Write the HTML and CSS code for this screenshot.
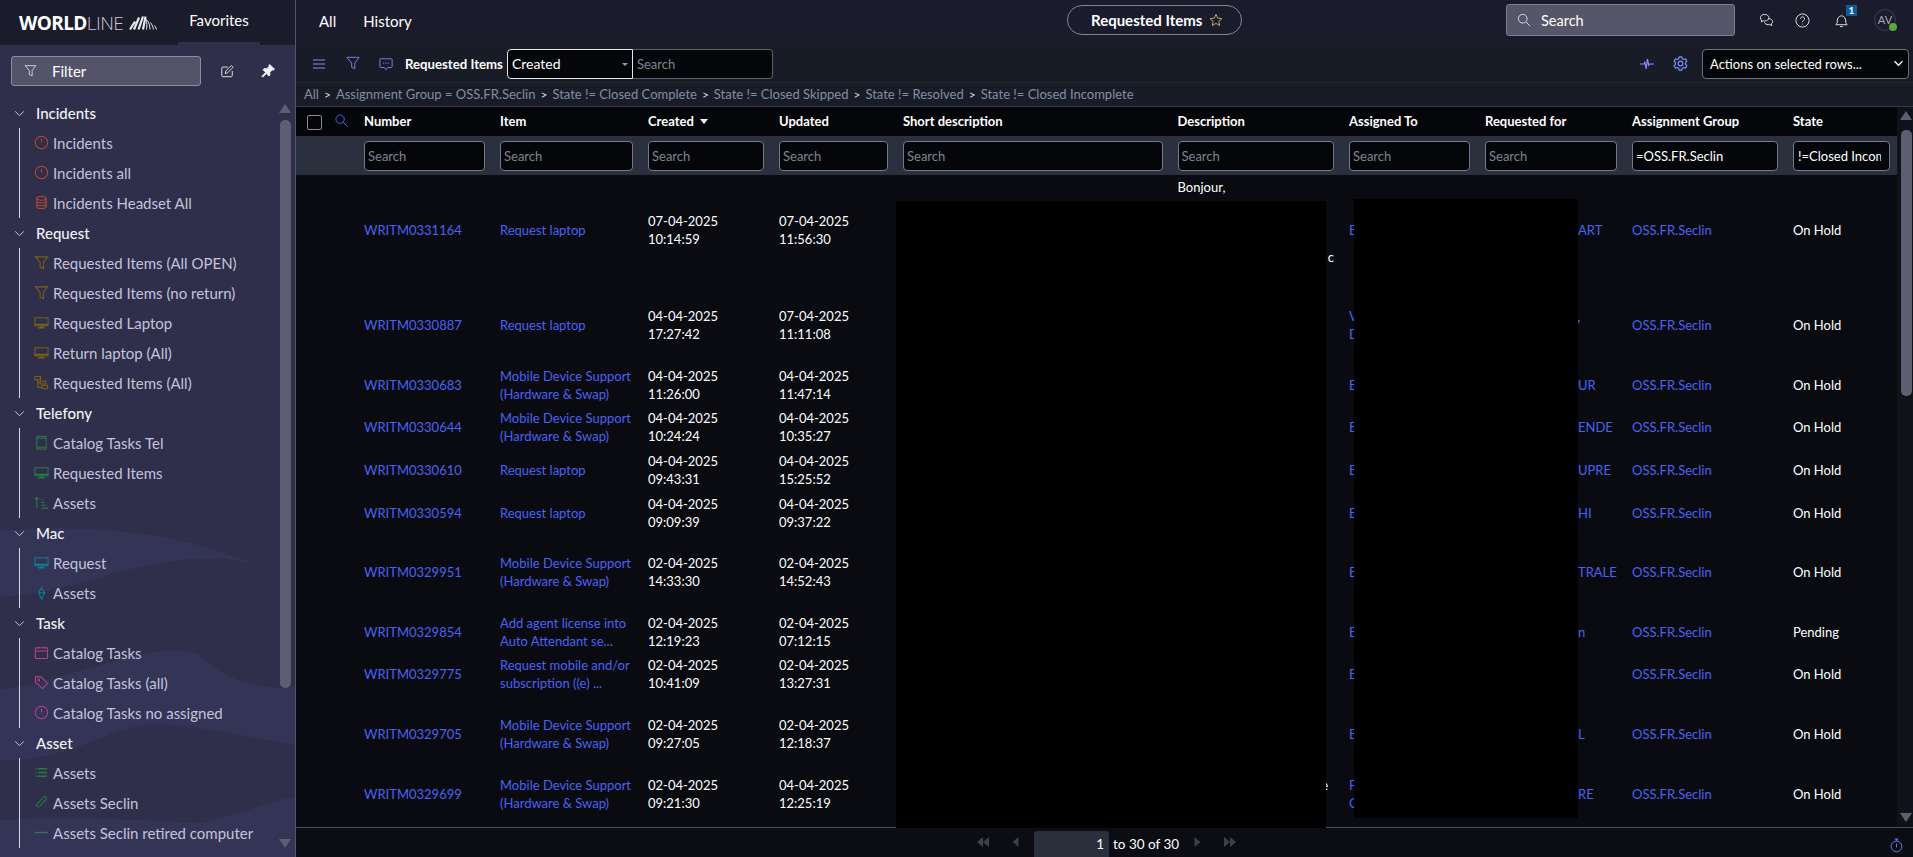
FILE: index.html
```html
<!DOCTYPE html>
<html lang="en">
<head>
    <meta charset="UTF-8">
    <title>Requested Items</title>
    <link rel="stylesheet" href="styles.css">
</head>
<body>
<svg class="defs" aria-hidden="true">
    <symbol id="i-alert" viewBox="0 0 16 16"><circle cx="8" cy="8" r="6.6"/><path d="M8 4v4"/></symbol>
    <symbol id="i-db" viewBox="0 0 16 16"><ellipse cx="8" cy="3.5" rx="5" ry="2"/><path d="M3 3.5v9c0 1.100 2.200 2 5 2s5-.9 5-2v-9M3 6.500c0 1.100 2.200 2 5 2s5-.9 5-2M3 9.500c0 1.100 2.200 2 5 2s5-.9 5-2"/></symbol>
    <symbol id="i-funnel" viewBox="0 0 16 16"><path d="M1.500 2h13L10 8v6.500L6.500 13V8z"/></symbol>
    <symbol id="i-monitor" viewBox="0 0 16 16"><rect x="1" y="3" width="14" height="8.500"/><path d="M1 10h14M8 11.500v2M4.500 13.500h7" stroke-width="1.600"/></symbol>
    <symbol id="i-tree" viewBox="0 0 16 16"><rect x="1" y="1.500" width="6" height="3.500"/><rect x="6.500" y="6.500" width="6" height="3"/><rect x="8.500" y="11" width="6" height="3.500"/><path d="M4 5v8h4.500M4 8h2.500"/></symbol>
    <symbol id="i-tablet" viewBox="0 0 16 16"><rect x="3" y="1.500" width="10" height="13.500"/><path d="M3 3.500h10M3 13h10"/></symbol>
    <symbol id="i-sort" viewBox="0 0 16 16"><path d="M3 14V3M1 5l2-2.500L5 5M8 5h2M8 8h3.500M8 11h5M8 14h7"/></symbol>
    <symbol id="i-bolt" viewBox="0 0 16 16"><path d="M9 1L5 8l3 7 3.500-6.500-3-4.500M5 8l3 .5M11.500 8.500L8 8"/></symbol>
    <symbol id="i-cal" viewBox="0 0 16 16"><rect x="1.500" y="3" width="13" height="11.500" rx="1"/><path d="M1.500 6.500h13M5 1.500V4M11 1.500V4"/></symbol>
    <symbol id="i-tag" viewBox="0 0 16 16"><path d="M1.500 2h6l7 7-5.500 5.500-7.500-7z"/><circle cx="5" cy="5.500" r="1"/></symbol>
    <symbol id="i-list" viewBox="0 0 16 16"><path d="M1.500 4h1M4 4h10M1.500 8h1M4 8h10M1.500 12h1M4 12h10" stroke-width="1.500"/></symbol>
    <symbol id="i-clip" viewBox="0 0 16 16"><path d="M13.500 4L6 12c-1 1-2.400 1-3 .3-.7-.7-.6-1.800.3-2.800L10 2.500c1-1 2-1 2.800-.3.8.8.7 1.900-.2 2.800L6 12"/></symbol>
    <symbol id="i-dash" viewBox="0 0 16 16"><path d="M1 8h14" stroke-width="1.500"/></symbol>
</svg>

<div class="page">
    <aside class="nav">
        <div class="nav-top">
            <div class="logo">
                <span class="logo-text"><b>WORLD</b>LINE</span>
                <svg class="logo-mark" viewBox="0 0 28 15">
                    <path class="mark-bold" d="M1 14.500l5-8M5 14.500l5-12M9.500 14.500l4.500-13M14 14.500l2.500-13"/>
                    <path d="M17.500 14.500c.5-3 .5-7-.5-11M21 14.500c0-3-1-6.500-2.500-9M24.500 14.500c-.5-2.500-1.500-5-3-7M27.500 14.500c-.5-1.500-1-3-2-4"/>
                </svg>
            </div>
            <div class="nav-tab">Favorites</div>
        </div>

        <svg class="nav-waves" viewBox="0 0 295 857" preserveAspectRatio="none">
            <path d="M0 530C100 525 200 530 295 585C250 556 220 556 180 560C120 566 60 595 0 597z"/>
            <path d="M0 690C70 680 150 640 197 653C215 672 250 692 295 687V745C240 735 180 722 143 725C100 733 70 760 0 760z"/>
            <path d="M0 820C70 815 130 820 200 823C240 815 270 800 295 797V857H0z"/>
        </svg>

        <div class="nav-filter">
            <div class="filter-box">
                <svg class="filter-icon" viewBox="0 0 16 16"><path d="M1.500 2h13L10 8v6.500L6.500 13V8z"/></svg>
                <span>Filter</span>
            </div>
            <svg class="tool-icon" viewBox="0 0 16 16"><path d="M14 8v5.500c0 .5-.5 1-1 1H3c-.5 0-1-.5-1-1v-9c0-.5.5-1 1-1h6M6 11l.7-3L13 1.700l2 2L8.800 10z"/></svg>
            <svg class="tool-icon pin" viewBox="0 0 16 16"><path d="M10 .5l5.500 5.500-1.500 1-1-.3-3 3 .3 2.800-1.300 1.300-3-3L2 15l-1-1 4.300-4.500-3-3L3.600 5.200l2.800.3 3-3L9 1.500z"/></svg>
        </div>

        <div class="nav-list">
            <div class="group">
                <div class="group-head"><svg class="chev" viewBox="0 0 12 8"><path d="M1 1.500l5 5 5-5"/></svg>Incidents</div>
                <ul>
                    <li class="red"><svg><use href="#i-alert"/></svg>Incidents</li>
                    <li class="red"><svg><use href="#i-alert"/></svg>Incidents all</li>
                    <li class="red"><svg><use href="#i-db"/></svg>Incidents Headset All</li>
                </ul>
            </div>
            <div class="group">
                <div class="group-head"><svg class="chev" viewBox="0 0 12 8"><path d="M1 1.500l5 5 5-5"/></svg>Request</div>
                <ul>
                    <li class="gold"><svg><use href="#i-funnel"/></svg>Requested Items (All OPEN)</li>
                    <li class="gold"><svg><use href="#i-funnel"/></svg>Requested Items (no return)</li>
                    <li class="gold"><svg><use href="#i-monitor"/></svg>Requested Laptop</li>
                    <li class="gold"><svg><use href="#i-monitor"/></svg>Return laptop (All)</li>
                    <li class="gold"><svg><use href="#i-tree"/></svg>Requested Items (All)</li>
                </ul>
            </div>
            <div class="group">
                <div class="group-head"><svg class="chev" viewBox="0 0 12 8"><path d="M1 1.500l5 5 5-5"/></svg>Telefony</div>
                <ul>
                    <li class="green"><svg><use href="#i-tablet"/></svg>Catalog Tasks Tel</li>
                    <li class="green"><svg><use href="#i-monitor"/></svg>Requested Items</li>
                    <li class="green"><svg><use href="#i-sort"/></svg>Assets</li>
                </ul>
            </div>
            <div class="group">
                <div class="group-head"><svg class="chev" viewBox="0 0 12 8"><path d="M1 1.500l5 5 5-5"/></svg>Mac</div>
                <ul>
                    <li class="teal"><svg><use href="#i-monitor"/></svg>Request</li>
                    <li class="teal"><svg><use href="#i-bolt"/></svg>Assets</li>
                </ul>
            </div>
            <div class="group">
                <div class="group-head"><svg class="chev" viewBox="0 0 12 8"><path d="M1 1.500l5 5 5-5"/></svg>Task</div>
                <ul>
                    <li class="pink"><svg><use href="#i-cal"/></svg>Catalog Tasks</li>
                    <li class="pink"><svg><use href="#i-tag"/></svg>Catalog Tasks (all)</li>
                    <li class="pink"><svg><use href="#i-alert"/></svg>Catalog Tasks no assigned</li>
                </ul>
            </div>
            <div class="group">
                <div class="group-head"><svg class="chev" viewBox="0 0 12 8"><path d="M1 1.500l5 5 5-5"/></svg>Asset</div>
                <ul>
                    <li class="green"><svg><use href="#i-list"/></svg>Assets</li>
                    <li class="green"><svg><use href="#i-clip"/></svg>Assets Seclin</li>
                    <li class="green"><svg><use href="#i-dash"/></svg>Assets Seclin retired computer</li>
                </ul>
            </div>
        </div>

        <div class="nav-scroll">
            <i class="arrow-up"></i>
            <i class="nav-thumb"></i>
            <i class="arrow-down"></i>
        </div>
    </aside>

    <main class="main">
        <header class="top">
            <nav class="top-tabs"><span>All</span><span>History</span></nav>
            <div class="pill">
                <b>Requested Items</b>
                <svg class="star" viewBox="0 0 16 16"><path d="M8 1.500l2 4.400 4.800.5-3.600 3.200 1 4.700L8 11.900l-4.200 2.400 1-4.700L1.200 6.400 6 5.900z"/></svg>
            </div>
            <div class="top-right">
                <div class="global-search">
                    <svg viewBox="0 0 16 16"><circle cx="6.500" cy="6.500" r="5"/><path d="M10.300 10.300L15 15"/></svg>
                    <span>Search</span>
                </div>
                <svg class="top-icon chat" viewBox="0 0 16 16"><path d="M6 1.500c2.600 0 4.500 1.500 4.500 3.500S8.600 8.500 6 8.500c-.6 0-1.100-.1-1.600-.2L2.500 9.500l.3-2C1.900 6.900 1.500 6 1.500 5c0-2 1.900-3.500 4.500-3.500z"/><path d="M10.400 6c2.300.1 4.100 1.400 4.100 3.200 0 .9-.4 1.700-1.200 2.300l.3 2-2-1.200c-.5.100-1 .2-1.600.2-2 0-3.700-1-4.200-2.500"/></svg>
                <svg class="top-icon help" viewBox="0 0 16 16"><circle cx="8" cy="8" r="7"/><path d="M5.800 6.200C5.800 5 6.800 4.200 8 4.200s2.200.8 2.200 2c0 1.700-2.200 1.700-2.200 3.300M8 11.300v1"/></svg>
                <div class="bell">
                    <svg class="top-icon" viewBox="0 0 16 16"><path d="M2 12.500c1.200-1 1.500-2 1.500-4 0-3 1.800-5.500 4.500-5.500s4.500 2.500 4.500 5.500c0 2 .3 3 1.500 4zM6.500 14.500h3"/></svg>
                    <span class="badge">1</span>
                </div>
                <div class="avatar">AV<i class="presence"></i></div>
            </div>
        </header>

        <div class="toolbar">
            <svg class="bar-icon burger" viewBox="0 0 12 10"><path d="M0 1h12M0 5h12M0 9h12"/></svg>
            <svg class="bar-icon funnel" viewBox="0 0 16 16"><path d="M1 1.500h14L10 8v6.500L6.500 13V8z"/></svg>
            <svg class="bar-icon comment" viewBox="0 0 16 16"><path d="M2 2h12c.6 0 1 .4 1 1v8c0 .6-.4 1-1 1h-4l-2 2.500L6 12H2c-.6 0-1-.4-1-1V3c0-.6.4-1 1-1zM4.500 7h1.500M7.300 7h1.500M10 7h1.500"/></svg>
            <b class="bar-title">Requested Items</b>
            <div class="field-select">Created<i class="caret"></i></div>
            <input class="bar-search" type="text" placeholder="Search">
            <div class="bar-right">
                <svg class="bar-icon pulse" viewBox="0 0 16 16"><path d="M0 8h4.500l1-2L7 13.500 8.500 2.500 10 9.500l1-1.500h5"/></svg>
                <svg class="bar-icon gear" viewBox="0 0 16 16"><path d="M6.500 1h3l.4 1.900 1.500.8 1.900-.6 1.500 2.500L13.400 7v2l1.400 1.400-1.500 2.500-1.900-.6-1.500.8L9.500 15h-3l-.4-1.900-1.500-.8-1.900.6-1.500-2.500L2.600 9V7L1.200 5.600l1.500-2.500 1.900.6 1.500-.8z"/><circle cx="8" cy="8" r="2.500"/></svg>
                <div class="actions">Actions on selected rows...<svg viewBox="0 0 12 8"><path d="M1.500 1.500L6 6l4.500-4.500"/></svg></div>
            </div>
        </div>

        <div class="crumbs">
            <span>All</span><i>&gt;</i><span>Assignment Group = OSS.FR.Seclin</span><i>&gt;</i><span>State != Closed Complete</span><i>&gt;</i><span>State != Closed Skipped</span><i>&gt;</i><span>State != Resolved</span><i>&gt;</i><span>State != Closed Incomplete</span>
        </div>

        <div class="list-wrap">
            <div class="list-clip">
                <table class="list">
                    <colgroup>
                        <col class="c-sel"><col class="c-num"><col class="c-item"><col class="c-date"><col class="c-upd"><col class="c-short"><col class="c-desc"><col class="c-asg"><col class="c-req"><col class="c-grp"><col class="c-state">
                    </colgroup>
                    <thead>
                        <tr class="head-row">
                            <th class="sel-cell">
                                <span class="check"></span>
                                <svg class="head-search" viewBox="0 0 14 14"><circle cx="5.500" cy="5.500" r="4.500"/><path d="M9 9l4.500 4.500"/></svg>
                            </th>
                            <th>Number</th>
                            <th>Item</th>
                            <th>Created <i class="sort-down"></i></th>
                            <th>Updated</th>
                            <th>Short description</th>
                            <th>Description</th>
                            <th>Assigned To</th>
                            <th>Requested for</th>
                            <th>Assignment Group</th>
                            <th>State</th>
                        </tr>
                        <tr class="search-row">
                            <th></th>
                            <th><input type="text" placeholder="Search"></th>
                            <th><input type="text" placeholder="Search"></th>
                            <th><input type="text" placeholder="Search"></th>
                            <th><input type="text" placeholder="Search"></th>
                            <th><input type="text" placeholder="Search"></th>
                            <th><input type="text" placeholder="Search"></th>
                            <th><input type="text" placeholder="Search"></th>
                            <th><input type="text" placeholder="Search"></th>
                            <th><input type="text" value="=OSS.FR.Seclin"></th>
                            <th><input type="text" value="!=Closed Incomplete"></th>
                        </tr>
                    </thead>
                    <tbody>
                        <tr>
                            <td></td><td><a>WRITM0331164</a></td><td><a>Request laptop</a></td>
                            <td>07-04-2025<br>10:14:59</td><td>07-04-2025<br>11:56:30</td><td></td>
                            <td class="desc-top">Bonjour,<div class="sliver-c">c</div></td>
                            <td><a>E</a></td><td class="req"><a>ART</a></td><td><a>OSS.FR.Seclin</a></td><td>On Hold</td>
                        </tr>
                        <tr>
                            <td></td><td><a>WRITM0330887</a></td><td><a>Request laptop</a></td>
                            <td>04-04-2025<br>17:27:42</td><td>07-04-2025<br>11:11:08</td><td></td><td></td>
                            <td><a>V<br>D</a></td><td class="req shift"><a>Y</a></td><td><a>OSS.FR.Seclin</a></td><td>On Hold</td>
                        </tr>
                        <tr>
                            <td></td><td><a>WRITM0330683</a></td><td><a>Mobile Device Support (Hardware &amp; Swap)</a></td>
                            <td>04-04-2025<br>11:26:00</td><td>04-04-2025<br>11:47:14</td><td></td><td></td>
                            <td><a>E</a></td><td class="req"><a>UR</a></td><td><a>OSS.FR.Seclin</a></td><td>On Hold</td>
                        </tr>
                        <tr>
                            <td></td><td><a>WRITM0330644</a></td><td><a>Mobile Device Support (Hardware &amp; Swap)</a></td>
                            <td>04-04-2025<br>10:24:24</td><td>04-04-2025<br>10:35:27</td><td></td><td></td>
                            <td><a>E</a></td><td class="req"><a>ENDE</a></td><td><a>OSS.FR.Seclin</a></td><td>On Hold</td>
                        </tr>
                        <tr>
                            <td></td><td><a>WRITM0330610</a></td><td><a>Request laptop</a></td>
                            <td>04-04-2025<br>09:43:31</td><td>04-04-2025<br>15:25:52</td><td></td><td></td>
                            <td><a>E</a></td><td class="req"><a>UPRE</a></td><td><a>OSS.FR.Seclin</a></td><td>On Hold</td>
                        </tr>
                        <tr>
                            <td></td><td><a>WRITM0330594</a></td><td><a>Request laptop</a></td>
                            <td>04-04-2025<br>09:09:39</td><td>04-04-2025<br>09:37:22</td><td></td><td></td>
                            <td><a>E</a></td><td class="req"><a>HI</a></td><td><a>OSS.FR.Seclin</a></td><td>On Hold</td>
                        </tr>
                        <tr>
                            <td></td><td><a>WRITM0329951</a></td><td><a>Mobile Device Support (Hardware &amp; Swap)</a></td>
                            <td>02-04-2025<br>14:33:30</td><td>02-04-2025<br>14:52:43</td><td></td><td></td>
                            <td><a>E</a></td><td class="req"><a>TRALE</a></td><td><a>OSS.FR.Seclin</a></td><td>On Hold</td>
                        </tr>
                        <tr>
                            <td></td><td><a>WRITM0329854</a></td><td><a>Add agent license into Auto Attendant se...</a></td>
                            <td>02-04-2025<br>12:19:23</td><td>02-04-2025<br>07:12:15</td><td></td><td></td>
                            <td><a>E</a></td><td class="req"><a>n</a></td><td><a>OSS.FR.Seclin</a></td><td>Pending</td>
                        </tr>
                        <tr>
                            <td></td><td><a>WRITM0329775</a></td><td><a>Request mobile and/or subscription ((e) ...</a></td>
                            <td>02-04-2025<br>10:41:09</td><td>02-04-2025<br>13:27:31</td><td></td><td></td>
                            <td><a>E</a></td><td class="req"></td><td><a>OSS.FR.Seclin</a></td><td>On Hold</td>
                        </tr>
                        <tr>
                            <td></td><td><a>WRITM0329705</a></td><td><a>Mobile Device Support (Hardware &amp; Swap)</a></td>
                            <td>02-04-2025<br>09:27:05</td><td>02-04-2025<br>12:18:37</td><td></td><td></td>
                            <td><a>E</a></td><td class="req"><a>L</a></td><td><a>OSS.FR.Seclin</a></td><td>On Hold</td>
                        </tr>
                        <tr>
                            <td></td><td><a>WRITM0329699</a></td><td><a>Mobile Device Support (Hardware &amp; Swap)</a></td>
                            <td>02-04-2025<br>09:21:30</td><td>04-04-2025<br>12:25:19</td><td></td>
                            <td class="sliver-e">e<br>&nbsp;</td>
                            <td><a>P<br>C</a></td><td class="req"><a>RE</a></td><td><a>OSS.FR.Seclin</a></td><td>On Hold</td>
                        </tr>
                    </tbody>
                </table>
            </div>
            <div class="list-scroll">
                <i class="arrow-up"></i>
                <i class="list-thumb"></i>
                <i class="arrow-down"></i>
            </div>
        </div>

        <footer class="pager">
            <svg class="page-icon" viewBox="0 0 14 12"><path d="M7 1v10L1 6zM13 1v10L7 6z"/></svg>
            <svg class="page-icon one prev" viewBox="0 0 7 12"><path d="M6.500 1v10L.5 6z"/></svg>
            <div class="page-box">1</div>
            <span class="page-text">to 30 of 30</span>
            <svg class="page-icon one" viewBox="0 0 7 12"><path d="M.5 1v10l6-5z"/></svg>
            <svg class="page-icon" viewBox="0 0 14 12"><path d="M1 1v10l6-5zM7 1v10l6-5z"/></svg>
            <svg class="timer" viewBox="0 0 14 16"><circle cx="7" cy="9" r="5.800"/><path d="M5 1h4M7 1v2M7 6v4"/></svg>
        </footer>
    </main>

    <div class="redact redact-a"></div>
    <div class="redact redact-b"></div>
</div>
</body>
</html>
```

FILE: styles.css
```css
:root {
    --head: #1a1b2b;
    --nav: #2f2f4b;
    --row: #090b11;
    --link: #4a62f4;
    --accent: #7f8cff;
}

* {
    box-sizing: border-box;
}

html, body {
    height: 100%;
    margin: 0;
    overflow: hidden;
}

body {
    background: var(--row);
    color: #fff;
    font-family: Lato, "Noto Sans", sans-serif;
    font-size: 13px;
}

.defs {
    display: none;
}

.page {
    display: flex;
    height: 857px;
    position: relative;
}

/* left nav */
.nav {
    width: 296px;
    flex: none;
    background: var(--nav);
    border-right: 1px solid #55556a;
    position: relative;
    overflow: hidden;
}

.nav-top {
    height: 45px;
    display: flex;
    background: var(--head);
    position: relative;
}

.logo {
    display: flex;
    align-items: center;
    padding-left: 19px;
    width: 178px;
    flex: none;
}

.logo-text {
    font-family: "Open Sans", sans-serif;
    font-size: 19px;
    letter-spacing: -0.6px;
    color: #c9c9cf;
    font-weight: 300;
}

.logo-text b {
    color: #fff;
    font-weight: 700;
}

.logo-mark {
    width: 28px;
    height: 15px;
    margin-left: 6px;
    fill: none;
    stroke: #e8e8ec;
    stroke-width: 1;
}

.logo-mark .mark-bold {
    stroke-width: 2.2;
}

.nav-tab {
    width: 82px;
    text-align: center;
    font-size: 15px;
    line-height: 40px;
    border-bottom: 3px solid var(--nav);
    height: 45px;
}

.nav-waves {
    position: absolute;
    left: 0;
    top: 0;
    width: 295px;
    height: 857px;
    fill: #343456;
    pointer-events: none;
}

.nav-filter {
    display: flex;
    align-items: flex-start;
    height: 53px;
    padding: 11px 0 0 11px;
    position: relative;
}

.filter-box {
    width: 190px;
    height: 30px;
    background: #555369;
    border: 1px solid #8d8c9c;
    border-radius: 3px;
    display: flex;
    align-items: center;
    padding-left: 12px;
    padding-bottom: 1px;
    font-size: 15px;
    gap: 15px;
}

.filter-icon {
    width: 13px;
    height: 15px;
    fill: none;
    stroke: #e6e6ec;
}

.tool-icon {
    width: 14px;
    height: 14px;
    margin: 8px 0 0 19px;
    fill: none;
    stroke: #f0f0f4;
}

.tool-icon.pin {
    margin-left: 27px;
    fill: #f4f4f8;
}

.nav-list {
    position: relative;
}

.group-head {
    height: 30px;
    display: flex;
    align-items: center;
    padding-left: 14px;
    font-size: 15px;
    font-weight: 500;
    color: #f2f2f6;
}

.chev {
    width: 11px;
    height: 7px;
    margin-right: 11px;
    fill: none;
    stroke: #dcdce6;
}

.group ul {
    list-style: none;
    margin: 0 0 0 19px;
    padding: 0;
    border-left: 1px solid #d8d8e4;
}

.group li {
    height: 30px;
    display: flex;
    align-items: center;
    padding-left: 14px;
    padding-bottom: 1px;
    font-size: 15px;
    color: #c3c3db;
}

.group li svg {
    width: 15px;
    height: 15px;
    margin-right: 4px;
    fill: none;
    stroke-width: 1.1;
    flex: none;
}

.red svg { stroke: #b6492f; }
.gold svg { stroke: #7c6212; }
.green svg { stroke: #2b7a45; }
.teal svg { stroke: #117d95; }
.pink svg { stroke: #b5408c; }

.nav-scroll {
    position: absolute;
    left: 279px;
    top: 104px;
    width: 13px;
    height: 744px;
}

.nav-thumb {
    position: absolute;
    left: 1px;
    top: 16px;
    width: 11px;
    height: 568px;
    background: #5f5d72;
    border-radius: 5px;
}

.arrow-up, .arrow-down {
    position: absolute;
    left: 0;
    width: 0;
    height: 0;
    border-left: 6px solid transparent;
    border-right: 6px solid transparent;
}

.arrow-up {
    top: 0;
    border-bottom: 9px solid #5f5d72;
}

.arrow-down {
    bottom: 0;
    border-top: 9px solid #5f5d72;
}

/* main column */
.main {
    flex: 1;
    min-width: 0;
    display: flex;
    flex-direction: column;
}

.top {
    height: 45px;
    background: var(--head);
    display: flex;
    align-items: center;
    position: relative;
    flex: none;
}

.top-tabs {
    display: flex;
    gap: 27px;
    padding-left: 23px;
    font-size: 15px;
    padding-bottom: 4px;
}

.pill {
    position: absolute;
    left: 771px;
    top: 5px;
    width: 175px;
    height: 30px;
    border: 1px solid #86869a;
    border-radius: 15px;
    display: flex;
    align-items: center;
    padding-left: 23px;
    font-size: 15px;
}

.star {
    width: 14px;
    height: 14px;
    margin-left: 7px;
    fill: none;
    stroke: #d4b978;
}

.top-right {
    margin-left: auto;
    display: flex;
    align-items: center;
    padding-right: 17px;
    padding-bottom: 5px;
}

.global-search {
    width: 229px;
    height: 32px;
    background: #575569;
    border: 1px solid #7e7d90;
    border-radius: 3px;
    display: flex;
    align-items: center;
    padding-left: 10px;
    font-size: 14.500px;
    gap: 10px;
    margin-right: 24px;
}

.global-search svg {
    width: 14px;
    height: 14px;
    fill: none;
    stroke: #e8e8ee;
}

.top-icon {
    width: 15px;
    height: 15px;
    fill: none;
    stroke: #e8e8ee;
    display: block;
}

.chat {
    margin-right: 21px;
}

.help {
    margin-right: 24px;
}

.bell {
    position: relative;
    margin-right: 25px;
}

.badge {
    position: absolute;
    left: 12px;
    top: -8px;
    width: 11px;
    height: 11px;
    background: #0d5a96;
    font-size: 10px;
    font-weight: 700;
    line-height: 11px;
    text-align: center;
}

.avatar {
    width: 22px;
    height: 22px;
    border: 1px solid #3c3e52;
    border-radius: 50%;
    font-size: 11px;
    line-height: 20px;
    text-align: center;
    color: #a8a8b8;
    position: relative;
}

.presence {
    position: absolute;
    right: -2px;
    bottom: -1px;
    width: 8px;
    height: 8px;
    border-radius: 50%;
    background: #56a83a;
}

/* list toolbar */
.toolbar {
    height: 38px;
    flex: none;
    background: #181c27;
    border-bottom: 1px solid #232733;
    display: flex;
    align-items: center;
    padding-left: 17px;
}

.bar-icon {
    fill: none;
    stroke: var(--accent);
    flex: none;
}

.burger {
    width: 12px;
    height: 10px;
}

.funnel {
    width: 14px;
    height: 14px;
    margin-left: 21px;
    margin-bottom: 2px;
}

.comment {
    width: 14px;
    height: 14px;
    margin-left: 19px;
}

.bar-title {
    margin-left: 12px;
    font-size: 13.200px;
    white-space: nowrap;
}

.field-select {
    width: 126px;
    height: 30px;
    margin-left: 4px;
    background: #05060a;
    border: 1px solid #e6e6ea;
    border-radius: 4px 0 0 4px;
    padding-left: 4px;
    line-height: 28px;
    font-size: 14px;
    position: relative;
}

.caret {
    position: absolute;
    right: 4px;
    top: 13px;
    border-left: 3px solid transparent;
    border-right: 3px solid transparent;
    border-top: 3px solid #999;
}

.bar-search {
    width: 140px;
    height: 30px;
    background: #05060a;
    border: 1px solid #5c5f6c;
    border-left: 0;
    border-radius: 0 4px 4px 0;
    color: #fff;
    font: 13px Lato, "Noto Sans", sans-serif;
    padding: 0 4px;
    outline: none;
}

input::placeholder {
    color: #80848f;
    opacity: 1;
}

.bar-right {
    margin-left: auto;
    display: flex;
    align-items: center;
    padding-right: 4px;
}

.pulse {
    width: 14px;
    height: 14px;
    margin-right: 19px;
    stroke-width: 1.4;
}

.gear {
    width: 15px;
    height: 15px;
    margin-right: 14px;
    stroke-width: 1.3;
    stroke-linejoin: round;
}

.actions {
    width: 207px;
    height: 30px;
    background: #05060a;
    border: 1px solid #6d707c;
    border-radius: 4px;
    padding-left: 7px;
    display: flex;
    align-items: center;
    justify-content: space-between;
    padding-right: 4px;
}

.actions svg {
    width: 11px;
    height: 7px;
    fill: none;
    stroke: #fff;
    stroke-width: 1.5;
}

.crumbs {
    height: 24px;
    flex: none;
    background: #181c27;
    border-bottom: 1px solid #363a46;
    padding-left: 8px;
    line-height: 23px;
    color: #858da0;
    white-space: nowrap;
}

.crumbs i {
    font-style: normal;
    color: #d8d8e0;
    margin: 0 5px;
    font-size: 12px;
}

/* table */
.list-wrap {
    flex: 1;
    min-height: 0;
    display: flex;
    position: relative;
}

.list-clip {
    flex: 1;
    min-width: 0;
    overflow: hidden;
}

.list {
    width: 1601px;
    table-layout: fixed;
    border-collapse: collapse;
}

.c-sel { width: 68px; }
.c-num { width: 136px; }
.c-item { width: 148px; }
.c-date { width: 131px; }
.c-upd { width: 124px; }
.c-short { width: 274.500px; }
.c-desc { width: 171.500px; }
.c-asg { width: 136px; }
.c-req { width: 147px; }
.c-grp { width: 161px; }
.c-state { width: 104px; }

.head-row {
    height: 29px;
    background: #05060a;
}

.list th {
    padding: 0 15px 0 0;
    text-align: left;
    font-weight: 700;
    white-space: nowrap;
}

.head-row th {
    padding-bottom: 2px;
}

.list th:last-child {
    padding-right: 7px;
}

.sel-cell {
    position: relative;
}

.check {
    position: absolute;
    left: 11px;
    top: 8px;
    width: 15px;
    height: 15px;
    border: 1px solid #8b8b8f;
    border-radius: 2px;
}

.head-search {
    position: absolute;
    left: 39px;
    top: 7px;
    width: 13px;
    height: 13px;
    fill: none;
    stroke: #5068ff;
}

.sort-down {
    display: inline-block;
    margin-left: 3px;
    vertical-align: 2px;
    border-left: 4px solid transparent;
    border-right: 4px solid transparent;
    border-top: 5px solid #fff;
}

.search-row {
    height: 39px;
    background: #2a303e;
}

.search-row input {
    width: 100%;
    height: 30px;
    display: block;
    background: #05060a;
    border: 1px solid #74788a;
    border-radius: 4px;
    color: #fff;
    font: 13px Lato, "Noto Sans", sans-serif;
    padding: 0 3px;
    outline: none;
}

.search-row th:last-child input {
    padding: 0 8px 0 4px;
}

.list tbody tr:nth-child(1) { height: 110px; }
.list tbody tr:nth-child(2) { height: 80px; }
.list tbody tr:nth-child(3) { height: 39px; }
.list tbody tr:nth-child(4) { height: 46px; }
.list tbody tr:nth-child(5) { height: 39px; }
.list tbody tr:nth-child(6) { height: 47px; }
.list tbody tr:nth-child(7) { height: 72px; }
.list tbody tr:nth-child(8) { height: 47px; }
.list tbody tr:nth-child(9) { height: 38px; }
.list tbody tr:nth-child(10) { height: 82px; }
.list tbody tr:nth-child(11) { height: 38px; }

.list td {
    padding: 0 15px 0 0;
    line-height: 18px;
    vertical-align: middle;
    overflow: hidden;
}

.list a {
    color: var(--link);
}

.list td.desc-top {
    vertical-align: top;
    padding-top: 3px;
}

.sliver-c {
    margin-top: 52px;
    text-align: right;
}

.list td.sliver-e {
    text-align: right;
    padding-right: 21px;
}

.list td.req {
    padding-left: 93px;
    padding-right: 0;
    white-space: nowrap;
}

.list td.shift {
    padding-left: 87px;
}

.list-scroll {
    width: 16px;
    flex: none;
    position: relative;
    background: #10121a;
}

.list-scroll .arrow-up {
    top: 4px;
    left: 3px;
}

.list-scroll .arrow-down {
    bottom: 5px;
    left: 3px;
}

.list-thumb {
    position: absolute;
    left: 4px;
    top: 23px;
    width: 11px;
    height: 266px;
    background: #5f5d72;
    border-radius: 5px;
}

/* pager */
.pager {
    height: 30px;
    flex: none;
    border-top: 1px solid #4a4c56;
    background: #0b0d12;
    display: flex;
    align-items: flex-end;
    padding-left: 680px;
    position: relative;
}

.page-icon {
    width: 14px;
    height: 12px;
    fill: #3d3f4a;
    margin: 0 22px 9px 0;
}

.page-icon.one {
    width: 7px;
}

.page-icon.prev {
    margin-right: 15px;
}

.page-box {
    width: 75px;
    height: 26px;
    background: #2a2f3c;
    border-radius: 3px 3px 0 0;
    text-align: right;
    padding-right: 5px;
    line-height: 26px;
    font-size: 13.500px;
}

.page-text {
    margin-left: 4px;
    line-height: 26px;
    margin-right: 15px;
    font-size: 13.500px;
}

.timer {
    position: absolute;
    left: 1594px;
    top: 10px;
    width: 13px;
    height: 15px;
    fill: none;
    stroke: #6f86ff;
}

.redact {
    position: absolute;
    background: #000;
}

.redact-a {
    left: 896px;
    top: 201px;
    width: 430px;
    height: 627px;
}

.redact-b {
    left: 1354px;
    top: 199px;
    width: 224px;
    height: 619px;
}
```
